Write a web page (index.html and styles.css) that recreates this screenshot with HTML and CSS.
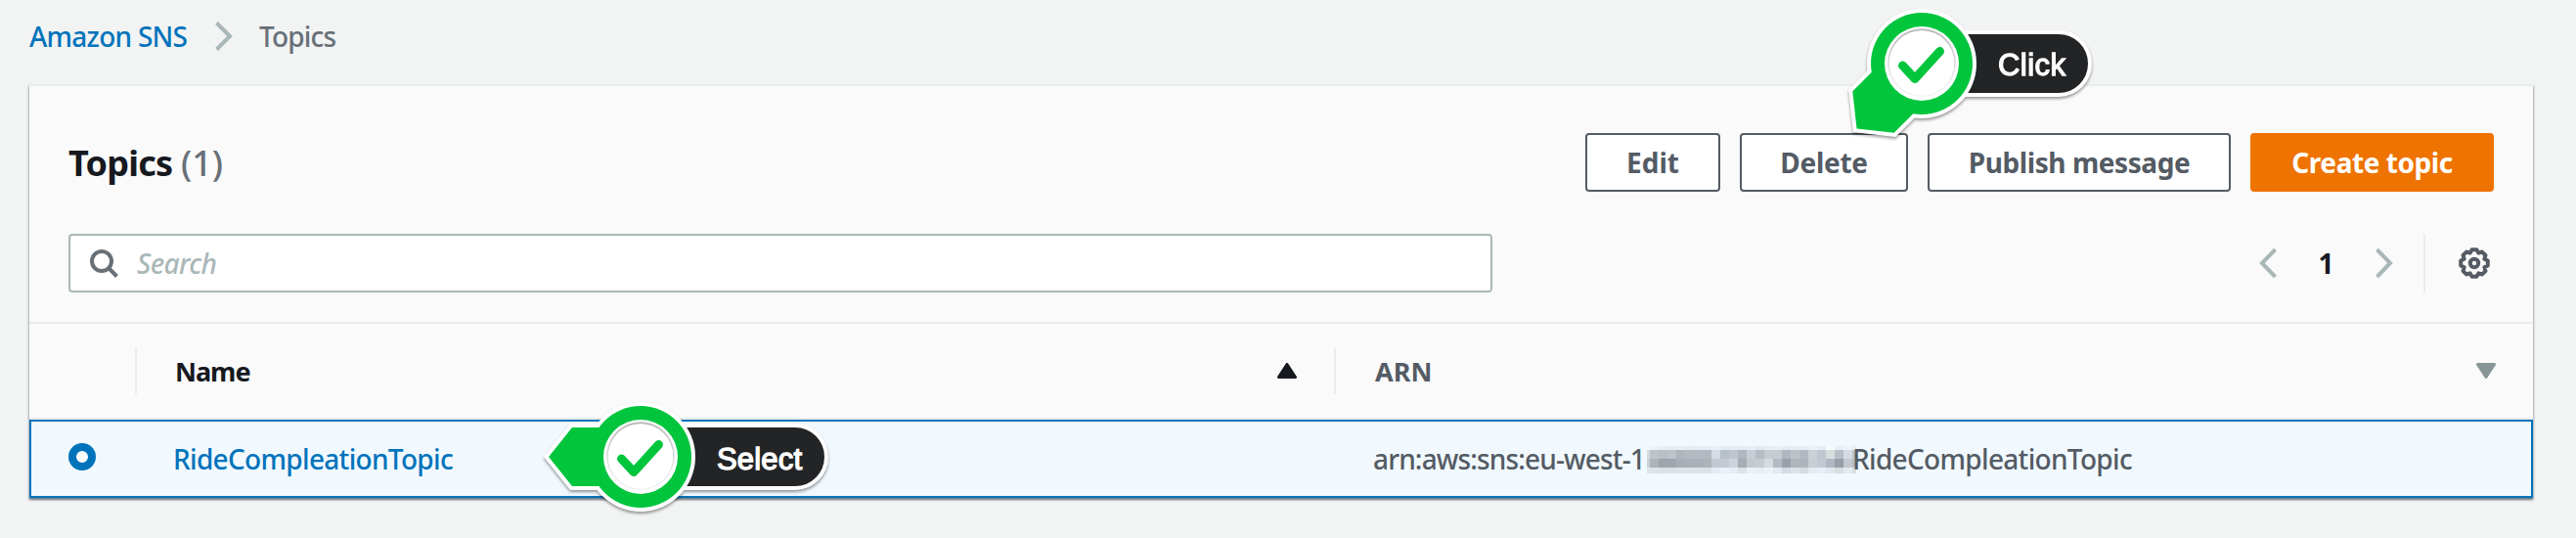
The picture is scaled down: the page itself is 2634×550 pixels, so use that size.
FILE: index.html
```html
<!DOCTYPE html>
<html lang="en">
<head>
<meta charset="utf-8">
<title>Topics - Amazon SNS</title>
<link rel="stylesheet" href="styles.css">
</head>
<body>
<nav class="crumbs">
  <a class="crumb-link" href="#">Amazon SNS</a>
  <svg class="crumb-sep" width="18" height="32" viewBox="0 0 18 32"><path d="M1.5 2.5 15 16 1.5 29.5" fill="none" stroke="#aab7b8" stroke-width="4"/></svg>
  <span class="crumb-current">Topics</span>
</nav>
<main class="card">
  <header class="card-head">
    <h1 class="title">Topics <span class="count">(1)</span></h1>
    <div class="actions">
      <button class="btn edit">Edit</button>
      <button class="btn delete">Delete</button>
      <button class="btn publish">Publish message</button>
      <button class="btn primary">Create topic</button>
    </div>
  </header>
  <div class="tools">
    <div class="search">
      <svg width="32" height="32" viewBox="0 0 32 32" fill="none" stroke="#687078" stroke-width="4"><circle cx="14" cy="14" r="10"/><path d="M21 21 29.5 29.5"/></svg>
      <span class="placeholder">Search</span>
    </div>
    <div class="pager">
      <svg width="18" height="32" viewBox="0 0 18 32"><path d="M16.500 2 3 16 16.500 30" fill="none" stroke="#aab7b8" stroke-width="4"/></svg>
      <span class="page">1</span>
      <svg width="18" height="32" viewBox="0 0 18 32"><path d="M1.500 2 15 16 1.500 30" fill="none" stroke="#aab7b8" stroke-width="4"/></svg>
      <span class="pager-rule"></span>
      <svg width="32" height="32" viewBox="-16 -16 32 32" fill="none" stroke="#545b64" stroke-width="4" stroke-linejoin="round"><path d="M13.800-2.400V2.400L10.350 4.290 11.460 8.060 8.060 11.460 4.290 10.350 2.400 13.800H-2.400L-4.290 10.350-8.060 11.460-11.460 8.060-10.350 4.290-13.800 2.400V-2.400L-10.350-4.290-11.460-8.060-8.060-11.460-4.290-10.350-2.400-13.800H2.400L4.290-10.350 8.060-11.460 11.460-8.060 10.350-4.290Z"/><circle r="4.200"/></svg>
    </div>
  </div>
  <div class="grid thead">
    <div class="cell pick"></div>
    <div class="cell name"><span>Name</span><svg width="20" height="16" viewBox="0 0 20 16"><path d="M10 1.500 18.500 14.500H1.500Z" fill="#16191f" stroke="#16191f" stroke-width="3" stroke-linejoin="round"/></svg></div>
    <div class="cell arn"><span>ARN</span><svg width="20" height="16" viewBox="0 0 20 16"><path d="M10 14.500 18.500 1.500H1.500Z" fill="#879596" stroke="#879596" stroke-width="3" stroke-linejoin="round"/></svg></div>
  </div>
  <div class="grid row">
    <div class="pick"><span class="radio"></span></div>
    <div class="name"><a class="topic" href="#">RideCompleationTopic</a></div>
    <div class="arn"><span class="arn-a">arn:aws:sns:eu-west-1</span><svg id="redacted" class="redacted" width="214" height="28" shape-rendering="crispEdges"></svg><span class="arn-b">RideCompleationTopic</span></div>
  </div>
</main>

<svg class="callout click" width="260" height="150" viewBox="-80 -65 260 150">
  <g class="lift">
    <path d="M0-32H140A32 32 0 0 1 140 32H0Z" fill="#232426" stroke="#fff" stroke-width="4"/>
    <g transform="rotate(-45)"><path d="M-94 0-70-30H-30V30H-70Z" fill="#fff" stroke="#fff" stroke-width="8"/></g>
    <circle r="56" fill="#fff"/>
  </g>
  <g transform="rotate(-45)"><path d="M-94 0-70-30H-30V30H-70Z" fill="#00c53d"/></g>
  <circle r="52" fill="#00c53d"/>
  <circle r="38" fill="#fff"/>
  <circle class="lens" cy="-.5" r="33.500"/>
  <path d="M-19.500 2-7 15.500 18.500-12.500" class="tick"/>
  <text class="label" x="78" y="12" textLength="69">Click</text>
</svg>
<svg class="callout select" width="310" height="130" viewBox="-110 -60 310 130">
  <g class="lift">
    <path d="M0-32H158A32 32 0 0 1 158 32H0Z" fill="#232426" stroke="#fff" stroke-width="4"/>
    <path d="M-94 0-70-30H-30V30H-70Z" fill="#fff" stroke="#fff" stroke-width="8"/>
    <circle r="56" fill="#fff"/>
  </g>
  <path d="M-94 0-70-30H-30V30H-70Z" fill="#00c53d"/>
  <circle r="52" fill="#00c53d"/>
  <circle r="38" fill="#fff"/>
  <circle class="lens" cy="-.5" r="33.500"/>
  <path d="M-19.500 2-7 15.500 18.500-12.500" class="tick"/>
  <text class="label" x="78" y="13" textLength="87">Select</text>
</svg>
<script src="redact.js"></script>
</body>
</html>
```
FILE: styles.css
```css
* { box-sizing: border-box; }
body {
  margin: 0;
  height: 550px;
  padding: 0 44px 0 30px;
  background: #f2f3f3;
  font: 28px/40px "Noto Sans", sans-serif;
  color: #545b64;
  position: relative;
  overflow: hidden;
}
svg { display: block; flex: none; }
a { text-decoration: none; color: #0073bb; }

.crumbs { display: flex; align-items: center; height: 86px; padding-bottom: 13px; }
.crumb-link { width: 162px; letter-spacing: -.75px; white-space: nowrap; font-weight: 500; }
.crumb-sep { margin: 0 27px 0 28px; }
.crumb-current { color: #687078; letter-spacing: -.8px; font-weight: 500; }

.card {
  border-top: 2px solid #eaeded;
  background: #fafafa;
  box-shadow: 0 2px 2px rgba(0, 28, 36, .3), 1px 2px 2px rgba(0, 28, 36, .2), -1px 2px 2px rgba(0, 28, 36, .2);
}
.card-head { display: flex; align-items: center; justify-content: space-between; padding: 48px 40px 0; }
.title { margin: 0; padding-top: 2px; font-size: 36px; line-height: 58px; color: #16191f; letter-spacing: -.75px; white-space: nowrap; }
.count { font-weight: 500; color: #687078; letter-spacing: 0; }
.actions { display: flex; gap: 20px; }
.btn {
  height: 60px;
  padding: 0;
  border: 2px solid #545b64;
  border-radius: 4px;
  background: #fff;
  color: #545b64;
  font: 700 28px/56px "Noto Sans", sans-serif;
  white-space: nowrap;
}
.edit { width: 138px; }
.delete { width: 172px; letter-spacing: -.3px; }
.publish { width: 310px; letter-spacing: -.43px; }
.primary { width: 249px; letter-spacing: -.45px; background: #ee7300; border-color: #ee7300; color: #fff; }

.tools { display: flex; justify-content: space-between; align-items: center; padding: 43px 40px 30px; }
.search {
  display: flex;
  align-items: center;
  width: 1456px;
  height: 60px;
  padding-left: 18px;
  border: 2px solid #aab7b8;
  border-radius: 4px;
  background: #fff;
}
.placeholder { margin-left: 18px; font-style: italic; font-weight: 500; letter-spacing: -.6px; color: #aab7b8; }
.pager { display: flex; align-items: center; padding-right: 4px; }
.page { width: 101px; text-align: center; font-weight: 700; color: #16191f; }
.pager-rule { width: 2px; height: 60px; margin: 0 34px 0 31px; background: #eaeded; }

.grid { display: grid; grid-template-columns: 110px 1226px 1fr; align-items: center; }
.thead { height: 100px; border-top: 2px solid #eaeded; border-bottom: 2px solid #eaeded; font-size: 27px; font-weight: 700; }
.cell { height: 48px; display: flex; align-items: center; justify-content: space-between; }
.cell span { padding-top: 2px; }
.cell.pick, .cell.name { border-right: 2px solid #eaeded; }
.cell.name { padding: 0 38px 0 39px; color: #16191f; letter-spacing: -1px; }
.cell.arn { padding: 0 38px 0 40px; }
.row { height: 80px; border: 2px solid #0073bb; background: #f1f9ff; }
.row .pick { padding: 0 0 4px 38px; }
.radio { display: block; width: 28px; height: 28px; border: 8px solid #0073bb; border-radius: 50%; background: #fff; }
.row .name { padding-left: 35px; }
.topic, .arn-b { letter-spacing: -.68px; font-weight: 500; }
.row .arn { display: flex; align-items: center; padding-left: 36px; white-space: nowrap; }
.arn-a { width: 280px; letter-spacing: -.85px; font-weight: 500; }
.redacted { margin-top: 2px; }
.arn-b { margin-left: -4px; }

.callout { position: absolute; overflow: visible; }
.click { left: 1885px; top: 0; }
.select { left: 545px; top: 407px; }
.lift { filter: drop-shadow(0 2px 1.5px rgba(0, 0, 0, .4)); }
.lens { fill: #fff; filter: drop-shadow(0 -1px 1px rgba(0, 0, 0, .5)); }
.tick { fill: none; stroke: #00c53d; stroke-width: 9; stroke-linecap: round; stroke-linejoin: round; }
.label { font: 31px "Liberation Sans", Arial, sans-serif; fill: #fff; stroke: #fff; stroke-width: 1.3px; }
```
FILE: redact.js
```js
// Mosaic that hides the account number inside the ARN.
const rows = [
  { y: 0, h: 4, c: "f0f8fc edf4f7 e8eff3 e6eef3 e9f0f5 e5edf1 e7eff4 e8eff4 ebf2f7 e4edf3 e3ecf1 e5edf2 e8f0f5 e2ebf0 e6eef2 e9f1f5 e4ecf1 e6eef3 e7eff4 ecf3f7 e5eef3 f3fbfd e8f0f5 edf4fa e8eff5" },
  { y: 4, h: 9, c: "d5dbe1 bdc4ca b9c1c7 bdc4ca aeb5bc b3bac1 b3bac1 b0b8c0 d5dbe2 b8c0c8 bfc6cd b0b7bf c8ced6 b5bcc4 c5ccd2 c5ccd2 b0b7c0 bcc3c9 b2b9c1 cbd1d7 c0c6cf d8dcdf b8bfc7 d5dbe3 bdc3cb" },
  { y: 13, h: 9, c: "cbd1d7 aeb4bb 9fa5ad 9ea5ad a8aeb6 aab0b7 a9b0b7 aeb3ba c3c9d1 c3c9d1 ccd3dc a6adb5 c4c9d0 c8ccd2 d7dce0 b4bac3 9aa1ab b0b6be adb4bc c9ced3 c4c9d1 b2b8c1 999fa8 c4c9d0 b5bbc3" },
  { y: 22, h: 6, c: "e0e7eb dde4e8 dae0e4 dce3e7 dde4e9 dde4e9 dce3e8 dbe1e6 e4ebf3 e8f0f9 e5edf4 dbe3e7 eaf2f6 e8eff3 ecf3f6 e2e9ef d4dbe0 dce3e8 d5dce1 e5ebf0 e8eef5 e0e7ec d8dfe3 e4ebf1 d9e0e6" }
];
const host = document.getElementById("redacted");
for (const row of rows) {
  row.c.split(" ").forEach((color, i) => {
    const r = document.createElementNS("http://www.w3.org/2000/svg", "rect");
    const x = i ? 3 + (i - 1) * 9 : 0;
    r.setAttribute("x", x);
    r.setAttribute("y", row.y);
    r.setAttribute("width", i ? Math.min(9, 214 - x) : 3);
    r.setAttribute("height", row.h);
    r.setAttribute("fill", "#" + color);
    host.appendChild(r);
  });
}
```
